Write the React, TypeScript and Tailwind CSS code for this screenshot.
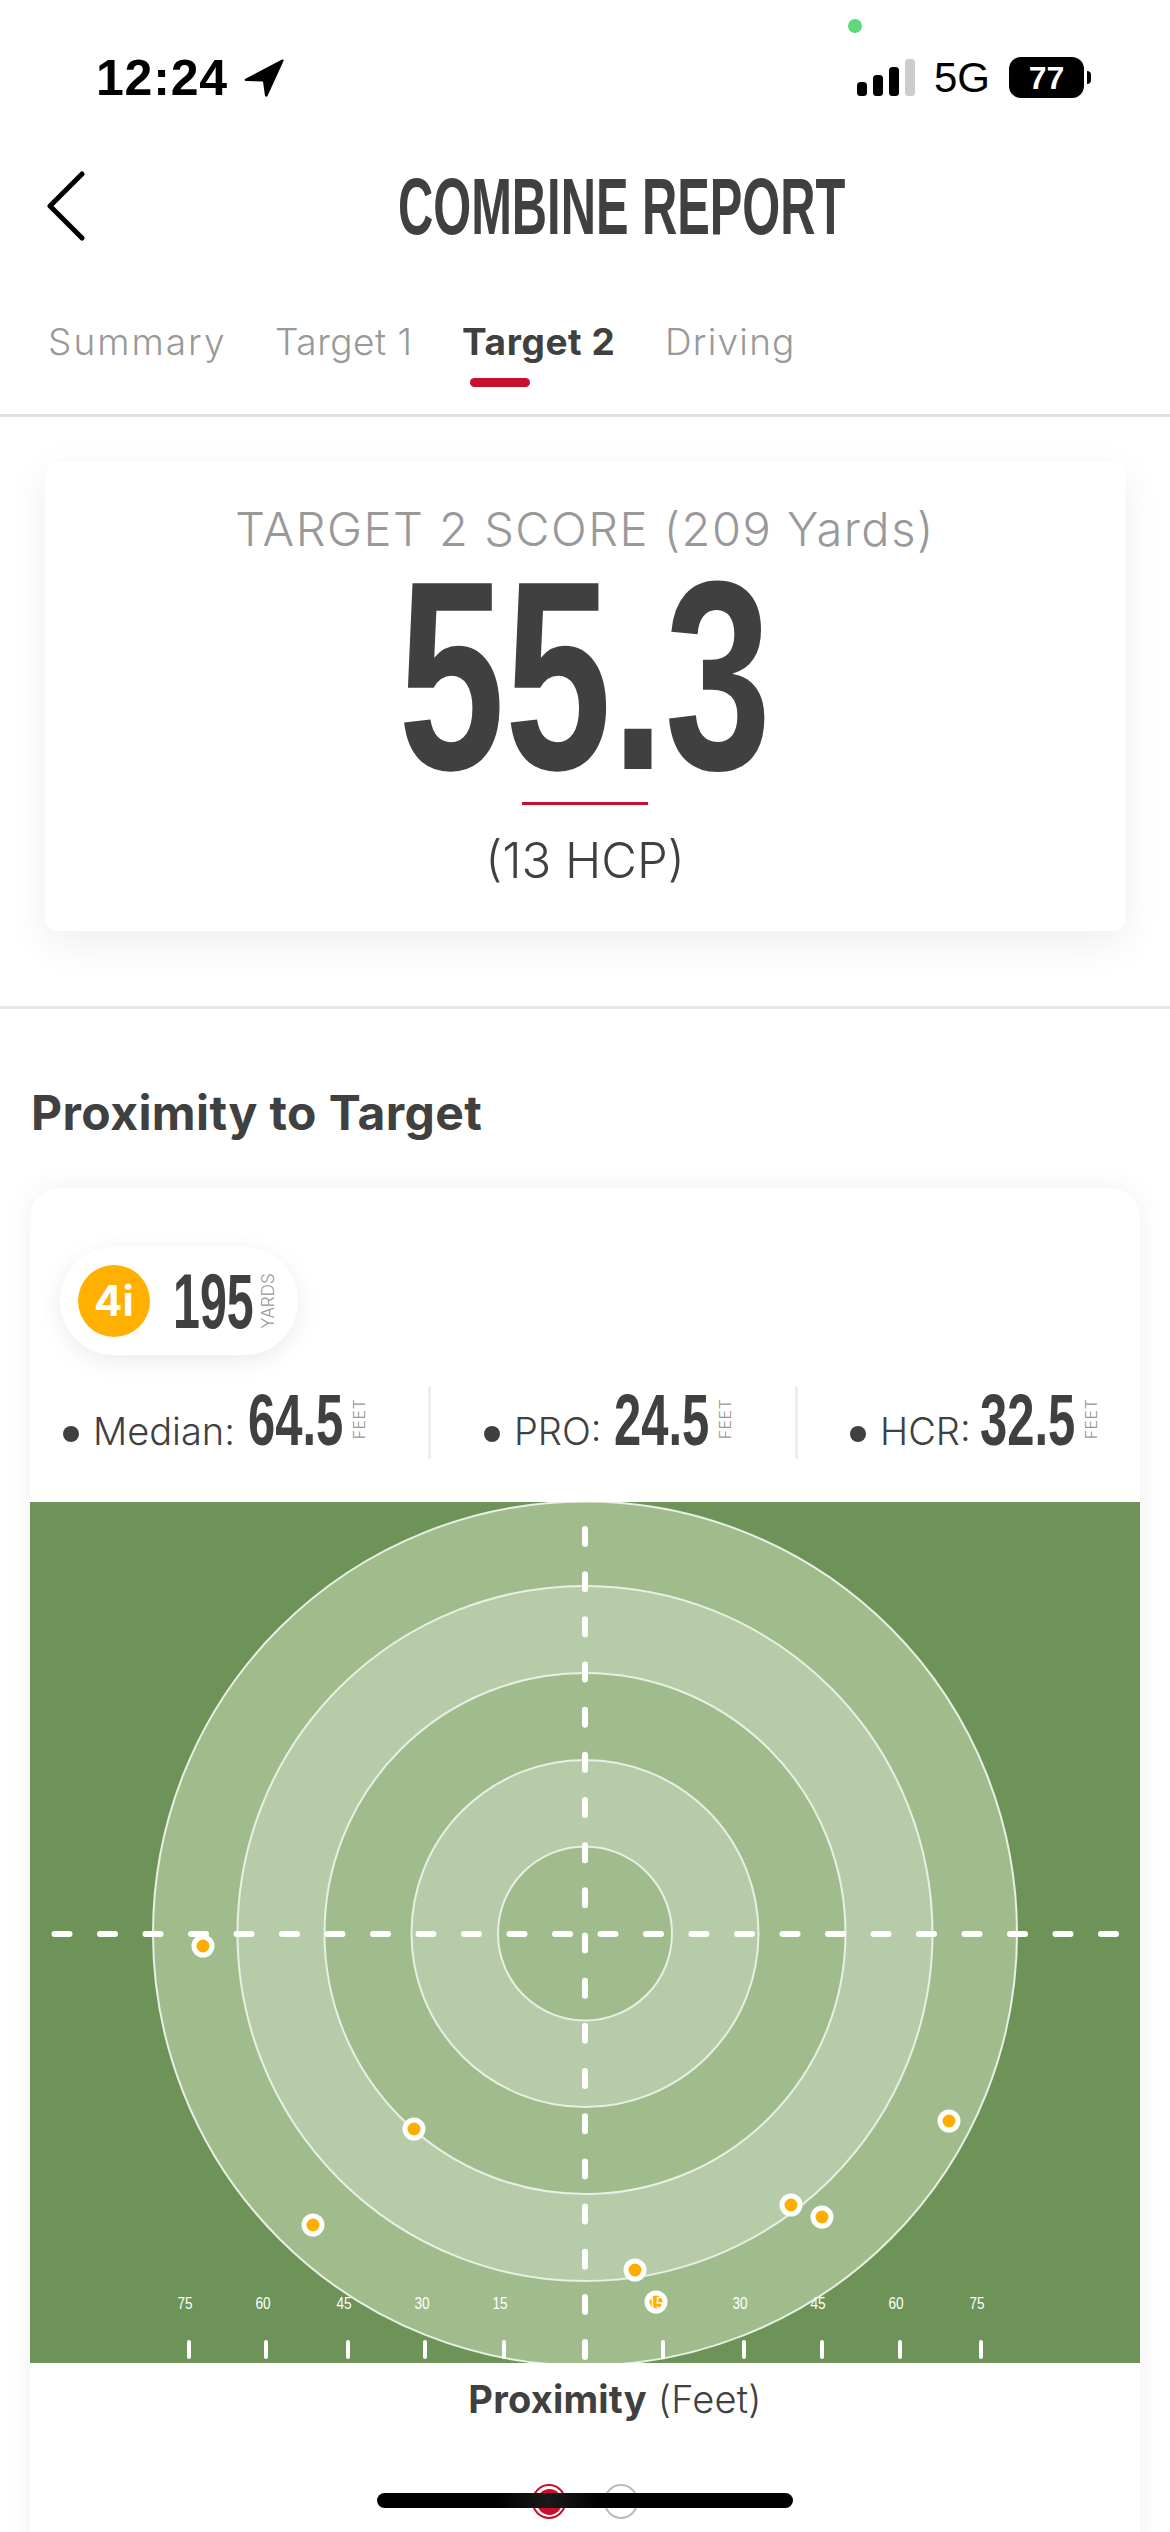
import React from 'react';

const rings = [
  { r: 432, fill: '#a0bc8d' },
  { r: 347.5, fill: '#b6cca8' },
  { r: 260.5, fill: '#a0bc8d' },
  { r: 173.5, fill: '#b6cca8' },
  { r: 87, fill: '#a0bc8d' },
];

const shots = [
  [173, 444], [384, 627], [919, 619], [761, 703], [792, 715], [283, 723], [605, 768], [626, 800],
];

const ticks = [159, 236, 318, 395, 474, 633, 714, 792, 870, 951];
const labels: [number, string][] = [
  [155, '75'], [233, '60'], [314, '45'], [392, '30'], [470, '15'], [626, '15'], [710, '30'], [788, '45'], [866, '60'], [947, '75'],
];

function StatusBar() {
  return (
    <div className="relative h-[110px] text-black font-['Liberation_Sans',sans-serif]">
      <div className="absolute left-[848px] top-[19px] w-[14px] h-[14px] rounded-full bg-[#5dd97c]" />
      <div className="flex items-start pt-[52px] pl-[96px]">
        <span className="text-[50px] leading-[52px] font-bold tracking-[0.8px]">12:24</span>
        <svg className="ml-[15px] mt-[6px]" width="42" height="40" viewBox="0 0 42 40">
          <path d="M39 1.5 L2 21 Q0.5 22.5 3 23 L20 23.5 L22 38 Q23 39.5 24.5 38 L40.5 3 Q41 1 39 1.5 Z" fill="#000" />
        </svg>
        <div className="ml-auto flex items-start">
          <svg width="60" height="40" viewBox="0 0 60 40" className="mt-[7px]">
            <rect x="0" y="23" width="10" height="14" rx="3.5" fill="#000" />
            <rect x="16" y="16" width="10" height="21" rx="3.5" fill="#000" />
            <rect x="32" y="8" width="10" height="29" rx="3.5" fill="#000" />
            <rect x="48" y="0" width="10" height="37" rx="3.5" fill="#ccc" />
          </svg>
          <span className="ml-[17px] mt-[4px] text-[42px] leading-[44px]">5G</span>
          <div className="ml-[19px] mt-[5px] w-[75px] h-[41px] rounded-[12px] bg-black flex items-center justify-center text-white text-[32px] font-bold leading-none">77</div>
          <div className="ml-[3px] mt-[19px] w-[4px] h-[13px] rounded-r-full bg-black mr-[79px]" />
        </div>
      </div>
    </div>
  );
}

function Tabs() {
  return (
    <div className="flex items-start pl-[48px] h-[95px] border-b-[3px] border-[#e0e0e0] font-['Inter',sans-serif] text-[37px] leading-[40px] text-[#999] font-light">
      <span className="w-[227px] tracking-[2px]">Summary</span>
      <span className="w-[187px] tracking-[0.5px]">Target 1</span>
      <div className="w-[203px] relative">
        <span className="font-bold text-[#404040] tracking-[0.6px]">Target 2</span>
        <div className="absolute left-[8px] top-[56px] w-[60px] h-[9px] rounded-full bg-[#c8102e]" />
      </div>
      <span className="tracking-[1.2px]">Driving</span>
    </div>
  );
}

function Stat({ label, value, width, labelWidth }: { label: string; value: string; width: string; labelWidth: string }) {
  return (
    <div className={`flex items-end mb-[6px] ${width}`}>
      <div className="w-[16px] h-[16px] rounded-full bg-[#404040] mb-[4px] mr-[14px] shrink-0" />
      <span className={`${labelWidth} shrink-0 text-[38px] leading-[30px] font-light whitespace-nowrap`}>{label}</span>
      <div className="w-[105px] shrink-0 h-[52px]">
        <span className="block origin-left scale-x-[0.68] font-['Liberation_Sans',sans-serif] font-bold text-[72px] leading-[52px] whitespace-nowrap">{value}</span>
      </div>
      <div className="w-[12px] h-[36px] mb-[9px] relative shrink-0">
        <span className="absolute left-[6px] top-[18px] -translate-x-1/2 -translate-y-1/2 -rotate-90 text-[16px] leading-none text-[#999] tracking-[0.5px] font-light">FEET</span>
      </div>
    </div>
  );
}

function Target() {
  return (
    <svg width="1110" height="861" viewBox="0 0 1110 861" className="block">
      <rect width="1110" height="861" fill="#6e9359" />
      {rings.map((c) => (
        <circle key={c.r} cx="555" cy="431.5" r={c.r} fill={c.fill} stroke="#e8efe3" strokeWidth="2" />
      ))}
      <line x1="24.5" x2="1090" y1="432" y2="432" stroke="#fff" strokeWidth="6" strokeLinecap="round" strokeDasharray="15 30.5" />
      <line x1="555" x2="555" y1="27" y2="857" stroke="#fff" strokeWidth="6" strokeLinecap="round" strokeDasharray="15 30.17" />
      {ticks.map((x) => (
        <rect key={x} x={x - 2} y="838" width="4" height="19" rx="2" fill="#fff" />
      ))}
      {shots.map(([x, y]) => (
        <circle key={x} cx={x} cy={y} r="9" fill="#ffae00" stroke="#fff" strokeWidth="5" />
      ))}
      {labels.map(([x, t]) => (
        <text key={x + t} x={x} y="807" textAnchor="middle" fill="#fff" fontSize="17" fontFamily="Liberation Sans" transform={`translate(${x * 0.2} 0) scale(0.8 1)`}>
          {t}
        </text>
      ))}
    </svg>
  );
}

export default function App() {
  return (
    <div className="relative w-[1170px] h-[2532px] overflow-hidden bg-white text-[#404040] font-['Inter',sans-serif]">
      <StatusBar />

      <div className="h-[212px] relative flex items-start justify-center">
        <svg className="absolute left-[46px] top-[61px]" width="40" height="70" viewBox="0 0 40 70">
          <path d="M36 3 L4 35 L36 67" fill="none" stroke="#000" strokeWidth="5" strokeLinecap="round" strokeLinejoin="round" />
        </svg>
        <div className="mt-[57px] ml-[74px] origin-center scale-x-[0.61] font-['Liberation_Sans',sans-serif] font-bold text-[80px] leading-[80px] whitespace-nowrap">COMBINE REPORT</div>
      </div>

      <Tabs />

      <div className="px-[45px] pt-[45px] pb-[75px] border-b-[3px] border-[#e8e8e8]">
        <div className="h-[469px] rounded-[12px] bg-white shadow-[0_12px_40px_rgba(0,0,0,0.07)] flex flex-col items-center">
          <div className="mt-[42px] text-[47px] leading-[50px] font-light text-[#999] tracking-[1.5px] whitespace-nowrap">TARGET 2 SCORE (209 Yards)</div>
          <div className="mt-[22px] h-[200px] scale-x-[0.71] font-['Liberation_Sans',sans-serif] font-bold text-[270px] leading-[200px] whitespace-nowrap">55.3</div>
          <div className="mt-[26px] w-[126px] h-[3px] bg-[#c8102e]" />
          <div className="mt-[31px] text-[49px] leading-[50px] font-light whitespace-nowrap">(13 HCP)</div>
        </div>
      </div>

      <div className="pl-[31px] pt-[79px] h-[179px] text-[48px] leading-[50px] font-bold tracking-[0.4px]">Proximity to Target</div>

      <div className="mx-[30px] rounded-t-[30px] bg-white shadow-[0_0_30px_rgba(0,0,0,0.06)] h-[1400px]">
        <div className="h-[314px] px-[30px] pt-[59px]">
          <div className="w-[238px] h-[108px] rounded-full bg-white shadow-[0_6px_24px_rgba(0,0,0,0.08)] flex items-center pl-[18px]">
            <div className="w-[72px] h-[72px] rounded-full bg-[#ffb000] flex items-center justify-center text-white font-bold text-[42px] leading-none">4i</div>
            <div className="ml-[23px] w-[89px] h-[72px]">
              <span className="block origin-left scale-x-[0.62] font-['Liberation_Sans',sans-serif] font-bold text-[78px] leading-[72px] whitespace-nowrap">195</span>
            </div>
            <div className="w-[12px] h-[52px] relative">
              <span className="absolute left-[6px] top-[26px] -translate-x-1/2 -translate-y-1/2 -rotate-90 text-[17px] leading-none text-[#999] font-light">YARDS</span>
            </div>
          </div>
          <div className="flex items-center mt-[32px] ml-[3px] h-[72px]">
            <Stat label="Median:" value="64.5" width="w-[365px]" labelWidth="w-[155px]" />
            <div className="w-[3px] h-[72px] bg-[#eeeeee]" />
            <div className="pl-[53px] w-[364px] flex">
              <Stat label="PRO:" value="24.5" width="w-[300px]" labelWidth="w-[100px]" />
            </div>
            <div className="w-[3px] h-[72px] bg-[#eeeeee]" />
            <div className="pl-[52px] flex">
              <Stat label="HCR:" value="32.5" width="w-[250px]" labelWidth="w-[100px]" />
            </div>
          </div>
        </div>
        <Target />
        <div className="pt-[16px] text-center text-[38px] leading-[40px] pl-[60px] font-light tracking-[0.2px]">
          <span className="font-bold">Proximity</span> (Feet)
        </div>
      </div>

      {/* carousel dots sit under the home bar */}
      <div className="absolute left-[532px] top-[2484px] w-[34px] h-[35px] rounded-full border-2 border-[#c8102e] bg-white flex items-center justify-center">
        <div className="w-[25px] h-[26px] rounded-full bg-[#c8102e]" />
      </div>
      <div className="absolute left-[604px] top-[2484px] w-[34px] h-[35px] rounded-full border-2 border-[#bbb] bg-white" />
      <div className="absolute left-[377px] top-[2493px] w-[416px] h-[15px] rounded-full bg-[linear-gradient(90deg,#000_29%,#1a1a1a_41%,#000_54%)]" />
    </div>
  );
}
